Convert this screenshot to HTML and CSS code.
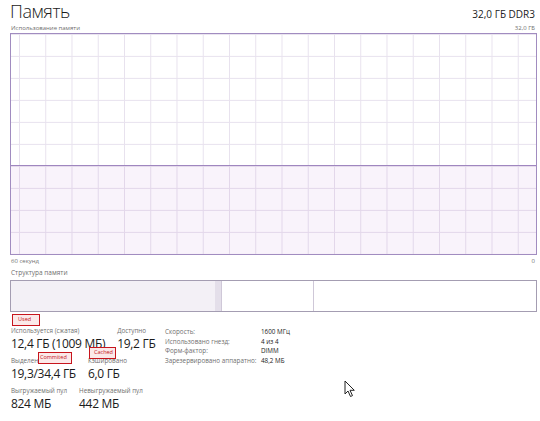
FILE: index.html
```html
<!DOCTYPE html>
<html lang="ru">
<head>
<meta charset="utf-8">
<title>Память</title>
<link rel="stylesheet" href="styles.css">
</head>
<body>
<div class="page">
  <header class="head">
    <h1 class="title">Память</h1>
    <span class="total">32,0 ГБ DDR3</span>
  </header>
  <div class="cap cap-top"><span>Использование памяти</span><span>32,0 ГБ</span></div>
  <div class="chart">
    <div class="chart-empty"></div>
    <div class="chart-fill"></div>
  </div>
  <div class="cap cap-axis"><span>60 секунд</span><span>0</span></div>
  <div class="cap cap-struct">Структура памяти</div>
  <div class="comp">
    <div class="seg seg-used"></div>
    <div class="seg seg-mod"></div>
    <div class="seg seg-standby"></div>
    <div class="seg seg-free"></div>
  </div>
  <div class="stats">
    <div class="stats-left">
      <div class="row">
        <div class="stat"><div class="lbl">Используется (сжатая)</div><div class="val">12,4 ГБ (1009 МБ)</div></div>
        <div class="stat"><div class="lbl">Доступно</div><div class="val">19,2 ГБ</div></div>
      </div>
      <div class="row">
        <div class="stat"><div class="lbl">Выделено</div><div class="val">19,3/34,4 ГБ</div></div>
        <div class="stat"><div class="lbl">Кэшировано</div><div class="val">6,0 ГБ</div></div>
      </div>
      <div class="row">
        <div class="stat"><div class="lbl">Выгружаемый пул</div><div class="val">824 МБ</div></div>
        <div class="stat"><div class="lbl">Невыгружаемый пул</div><div class="val">442 МБ</div></div>
      </div>
    </div>
    <dl class="stats-right">
      <dt>Скорость:</dt><dd>1600 МГц</dd>
      <dt>Использовано гнезд:</dt><dd>4 из 4</dd>
      <dt>Форм-фактор:</dt><dd>DIMM</dd>
      <dt>Зарезервировано аппаратно:</dt><dd>48,2 МБ</dd>
    </dl>
  </div>

  <span class="tag tag-used">Used</span>
  <span class="tag tag-committed">Commited</span>
  <span class="tag tag-cached">Cached</span>

  <svg class="cursor" width="12" height="18" viewBox="0 0 12 18" aria-hidden="true">
    <path d="M1 1 L1 14 L4 11 L6.5 16.5 L8.5 15.6 L6 10.3 L10.3 10.3 Z" fill="#fff" stroke="#222" stroke-width="1" stroke-linejoin="round"/>
  </svg>
</div>
</body>
</html>
```

FILE: styles.css
```css
* { box-sizing: border-box; }
html, body { margin: 0; padding: 0; background: #fff; }
body {
  font-family: "Open Sans", "Noto Sans", sans-serif;
  color: #1b1b1b;
}
.page {
  position: relative;
  width: 540px;
  height: 421px;
  padding: 0 3px 0 10px;
  overflow: hidden;
}
.head {
  display: flex;
  justify-content: space-between;
  align-items: baseline;
  height: 23px;
}
.title {
  margin: 0;
  font-size: 18px;
  font-weight: 300;
  line-height: 24px;
  margin-top: -1px;
  letter-spacing: -0.4px;
}
.total {
  font-size: 10px;
  padding-right: 2px;
  color: #222;
}
.cap {
  display: flex;
  justify-content: space-between;
  font-size: 6px;
  color: #6f6f6f;
  line-height: 8px;
  padding: 0 2px 0 1px;
}
.cap-top { height: 10px; padding-top: 1px; }
.cap-axis { height: 10px; padding-top: 2px; }
.cap-struct { height: 15px; padding-top: 4px; font-size: 6.5px; }

.chart {
  height: 222px;
  border: 1px solid #a18cc0;
  display: flex;
  flex-direction: column;
  background-image:
    linear-gradient(to right, #e8e2ee 1px, transparent 1px),
    linear-gradient(to bottom, #e8e2ee 1px, transparent 1px);
  background-size: 26.25px 100%, 100% 10%;
  background-position: 8px 0, 0 -0.1px;
}
.chart-empty { flex: 60; }
.chart-fill {
  flex: 40;
  border-top: 1px solid #9f86bf;
  background: rgba(139, 18, 174, 0.05);
}

.comp {
  height: 32px;
  border: 1px solid #a49db2;
  display: flex;
}
.seg { height: 100%; }
.seg-used { width: 204px; background: #f3f0f6; }
.seg-mod { width: 7px; background: #e4dfea; border-right: 1px solid #cfc8d8; }
.seg-standby { width: 92px; border-right: 1px solid #cfc8d8; }
.seg-free { flex: 1; }

.stats {
  display: flex;
  padding: 15px 0 0 1px;
}
.stats-left { width: 154px; }
.row { display: flex; gap: 12px; margin-bottom: 5px; }
.lbl {
  font-size: 6.3px;
  color: #6f6f6f;
  line-height: 8px;
  white-space: nowrap;
}
.val {
  font-size: 12px;
  line-height: 17px;
  letter-spacing: -0.3px;
  white-space: nowrap;
  color: #1b1b1b;
}
.stats-right {
  margin: 0;
  display: grid;
  grid-template-columns: 96px auto;
  font-size: 6.3px;
  line-height: 9.7px;
  align-content: start;
}
.stats-right dt { color: #6f6f6f; }
.stats-right dd { margin: 0; color: #222; }

.tag {
  position: absolute;
  font-size: 5.5px;
  line-height: 9px;
  color: #c3121a;
  background: #fbe9e9;
  border: 1.5px solid #c7151d;
  padding: 0 3px;
  white-space: nowrap;
}
.tag-used { left: 12px; top: 314px; width: 28px; height: 12px; padding-left: 5px; }
.tag-committed { left: 38px; top: 352px; width: 34px; height: 12px; padding: 0 1px; }
.tag-cached { left: 89px; top: 347px; width: 27px; height: 12px; padding-left: 4px; }

.cursor {
  position: absolute;
  left: 344px;
  top: 380px;
}
```
